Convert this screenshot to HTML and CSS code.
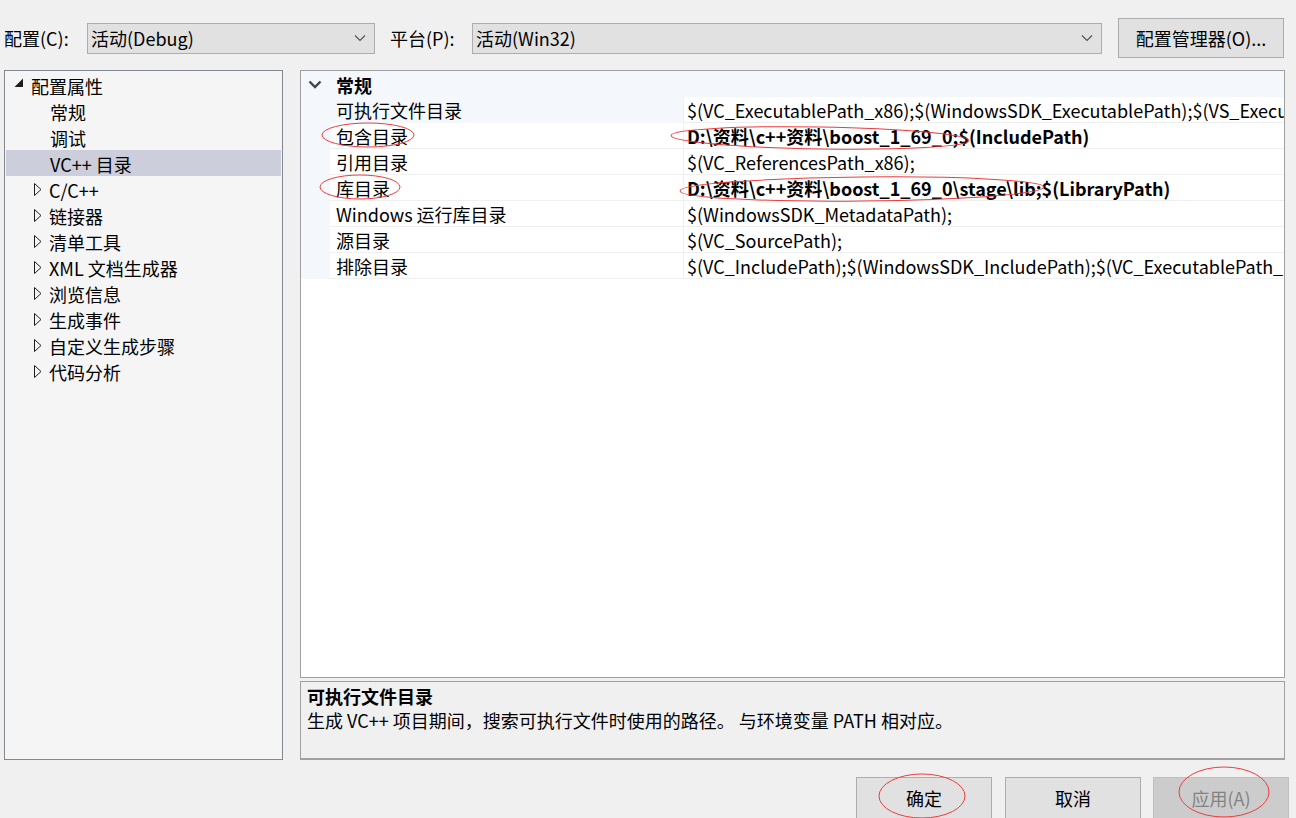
FILE: index.html
```html
<!DOCTYPE html>
<html lang="zh-CN">
<head>
<meta charset="utf-8">
<title>属性页</title>
<link rel="stylesheet" href="styles.css">
</head>
<body>
<div class="dialog">
  <div class="topbar">
    <span class="lbl lbl-config">配置(C):</span>
    <div class="combo combo-config">
      <span class="combo-text">活动(Debug)</span>
      <svg class="combo-arrow" width="12" height="8" viewBox="0 0 12 8"><polyline points="1,1.5 6,6.5 11,1.5" fill="none" stroke="#555" stroke-width="1.2"/></svg>
    </div>
    <span class="lbl lbl-platform">平台(P):</span>
    <div class="combo combo-platform">
      <span class="combo-text">活动(Win32)</span>
      <svg class="combo-arrow" width="12" height="8" viewBox="0 0 12 8"><polyline points="1,1.5 6,6.5 11,1.5" fill="none" stroke="#555" stroke-width="1.2"/></svg>
    </div>
    <button class="btn btn-manager">配置管理器(O)...</button>
  </div>

  <div class="main">
    <div class="tree">
      <div class="node root">
        <svg class="tw tw-open" width="10" height="10" viewBox="0 0 10 10"><polygon points="9,0.5 9,9 0.5,9" fill="#1E1E1E"/></svg>
        <span>配置属性</span>
      </div>
      <div class="node leaf"><span>常规</span></div>
      <div class="node leaf"><span>调试</span></div>
      <div class="node leaf selected"><span>VC++ 目录</span></div>
      <div class="node branch"><svg class="tw" width="8" height="13" viewBox="0 0 8 13"><polygon points="0.5,0.5 7,6.5 0.5,12.5" fill="none" stroke="#1E1E1E" stroke-width="1"/></svg><span>C/C++</span></div>
      <div class="node branch"><svg class="tw" width="8" height="13" viewBox="0 0 8 13"><polygon points="0.5,0.5 7,6.5 0.5,12.5" fill="none" stroke="#1E1E1E" stroke-width="1"/></svg><span>链接器</span></div>
      <div class="node branch"><svg class="tw" width="8" height="13" viewBox="0 0 8 13"><polygon points="0.5,0.5 7,6.5 0.5,12.5" fill="none" stroke="#1E1E1E" stroke-width="1"/></svg><span>清单工具</span></div>
      <div class="node branch"><svg class="tw" width="8" height="13" viewBox="0 0 8 13"><polygon points="0.5,0.5 7,6.5 0.5,12.5" fill="none" stroke="#1E1E1E" stroke-width="1"/></svg><span>XML 文档生成器</span></div>
      <div class="node branch"><svg class="tw" width="8" height="13" viewBox="0 0 8 13"><polygon points="0.5,0.5 7,6.5 0.5,12.5" fill="none" stroke="#1E1E1E" stroke-width="1"/></svg><span>浏览信息</span></div>
      <div class="node branch"><svg class="tw" width="8" height="13" viewBox="0 0 8 13"><polygon points="0.5,0.5 7,6.5 0.5,12.5" fill="none" stroke="#1E1E1E" stroke-width="1"/></svg><span>生成事件</span></div>
      <div class="node branch"><svg class="tw" width="8" height="13" viewBox="0 0 8 13"><polygon points="0.5,0.5 7,6.5 0.5,12.5" fill="none" stroke="#1E1E1E" stroke-width="1"/></svg><span>自定义生成步骤</span></div>
      <div class="node branch"><svg class="tw" width="8" height="13" viewBox="0 0 8 13"><polygon points="0.5,0.5 7,6.5 0.5,12.5" fill="none" stroke="#1E1E1E" stroke-width="1"/></svg><span>代码分析</span></div>
    </div>

    <div class="right">
      <div class="grid">
        <div class="grow header">
          <div class="gutter"><svg width="14" height="10" viewBox="0 0 14 10"><polyline points="1.5,1.5 7,7 12.5,1.5" fill="none" stroke="#444" stroke-width="2.4"/></svg></div>
          <div class="hname">常规</div>
        </div>
        <div class="grow">
          <div class="gutter"></div>
          <div class="name active">可执行文件目录</div>
          <div class="value">$(VC_ExecutablePath_x86);$(WindowsSDK_ExecutablePath);$(VS_Execu</div>
        </div>
        <div class="grow">
          <div class="gutter"></div>
          <div class="name">包含目录</div>
          <div class="value bold">D:\资料\c++资料\boost_1_69_0;$(IncludePath)</div>
        </div>
        <div class="grow">
          <div class="gutter"></div>
          <div class="name">引用目录</div>
          <div class="value">$(VC_ReferencesPath_x86);</div>
        </div>
        <div class="grow">
          <div class="gutter"></div>
          <div class="name">库目录</div>
          <div class="value bold">D:\资料\c++资料\boost_1_69_0\stage\lib;$(LibraryPath)</div>
        </div>
        <div class="grow">
          <div class="gutter"></div>
          <div class="name">Windows 运行库目录</div>
          <div class="value">$(WindowsSDK_MetadataPath);</div>
        </div>
        <div class="grow">
          <div class="gutter"></div>
          <div class="name">源目录</div>
          <div class="value">$(VC_SourcePath);</div>
        </div>
        <div class="grow">
          <div class="gutter"></div>
          <div class="name">排除目录</div>
          <div class="value">$(VC_IncludePath);$(WindowsSDK_IncludePath);$(VC_ExecutablePath_</div>
        </div>
      </div>
      <div class="desc">
        <div class="desc-title">可执行文件目录</div>
        <div class="desc-text">生成 VC++ 项目期间，搜索可执行文件时使用的路径。 与环境变量 PATH 相对应。</div>
      </div>
    </div>
  </div>

  <div class="actions">
    <button class="btn btn-action">确定</button>
    <button class="btn btn-action">取消</button>
    <button class="btn btn-action disabled">应用(A)</button>
  </div>

  <svg class="annot" width="1296" height="818" viewBox="0 0 1296 818">
    <ellipse cx="368" cy="135" rx="46" ry="12" />
    <ellipse cx="360" cy="187" rx="40" ry="12" />
    <ellipse cx="820" cy="138" rx="149" ry="11" transform="rotate(1 820 138)" />
    <ellipse cx="862" cy="189" rx="182" ry="12" transform="rotate(-0.6 862 189)" />
    <ellipse cx="922" cy="796" rx="43" ry="22" />
    <ellipse cx="1224" cy="792" rx="45" ry="25" />
  </svg>
</div>
</body>
</html>
```
FILE: styles.css
```css
* { box-sizing: border-box; }
html, body {
  margin: 0;
  padding: 0;
}
body {
  background: #F0F0F0;
  font-family: "Noto Sans CJK SC", "Noto Sans", sans-serif;
  font-size: 18px;
  color: #000;
  width: 1296px;
  height: 818px;
  overflow: hidden;
}
.dialog {
  position: relative;
  width: 1296px;
  height: 818px;
  padding: 18px 0 0 4px;
  overflow: hidden;
}

/* top bar */
.topbar {
  display: flex;
  align-items: center;
  height: 40px;
}
.lbl {
  display: block;
  line-height: 26px;
  white-space: nowrap;
}
.lbl-config { width: 83px; }
.lbl-platform { width: 82px; margin-left: 15px; }
.combo {
  display: flex;
  align-items: center;
  justify-content: space-between;
  height: 31px;
  background: #E1E1E1;
  border: 1px solid #ADADAD;
  padding: 0 8px 0 3px;
}
.combo-config { width: 288px; }
.combo-platform { width: 630px; }
.combo-text { line-height: 26px; white-space: nowrap; }
.combo-arrow { display: block; }

.btn {
  font-family: inherit;
  font-size: 18px;
  color: #000;
  background: #E1E1E1;
  border: 1px solid #ADADAD;
  padding: 0;
  margin: 0;
}
.btn-manager {
  width: 166px;
  height: 40px;
  margin-left: 16px;
}

/* main */
.main {
  display: flex;
  margin-top: 12px;
  height: 690px;
}
.tree {
  width: 279px;
  height: 690px;
  background: #F5F5F5;
  border: 1px solid #828790;
  padding: 1px 1px 0 1px;
}
.node {
  display: flex;
  align-items: center;
  height: 26px;
  white-space: nowrap;
}
.node span { line-height: 26px; padding-top: 1px; }
.node.root { padding-left: 8px; }
.node.root .tw-open { margin-right: 7px; margin-top: -4px; }
.node.leaf { padding-left: 44px; }
.node.selected { background: #CCCEDB; }
.node.branch { padding-left: 28px; }
.node.branch .tw { margin-right: 7px; }

.right {
  margin-left: 17px;
  width: 985px;
  display: flex;
  flex-direction: column;
}
.grid {
  height: 608px;
  background: #FFFFFF;
  border: 1px solid #A0A0A0;
  overflow: hidden;
}
.grow {
  display: grid;
  grid-template-columns: 29px 353px 1fr;
  height: 26px;
}
.grow.header {
  background: #F4F7FC;
  grid-template-columns: 29px 1fr;
}
.gutter {
  background: #F4F7FC;
  display: flex;
  align-items: center;
  padding-left: 7px;
}
.hname {
  font-weight: bold;
  line-height: 26px;
  padding-left: 6px;
  padding-top: 1px;
}
.name {
  line-height: 25px;
  padding: 1px 0 0 6px;
  border-bottom: 1px solid #F0F0F0;
  white-space: nowrap;
  overflow: hidden;
}
.name.active { background: #F4F7FC; border-bottom-color: #F4F7FC; }
.value {
  line-height: 25px;
  padding: 1px 0 0 3px;
  border-left: 1px solid #F0F0F0;
  border-bottom: 1px solid #F0F0F0;
  white-space: nowrap;
  overflow: hidden;
}
.value.bold { font-weight: bold; }

.desc {
  margin-top: 3px;
  height: 79px;
  background: #F0F0F0;
  border: 1px solid #A0A0A0;
  border-bottom: 2px solid #A0A0A0;
  padding: 2px 0 0 6px;
}
.desc-title { font-weight: bold; line-height: 24px; }
.desc-text { line-height: 24px; white-space: nowrap; }

/* actions */
.actions {
  display: flex;
  margin-top: 17px;
  padding-left: 852px;
}
.btn-action {
  width: 136px;
  height: 42px;
  margin-right: 13px;
  padding-top: 0;
}
.btn-action.disabled {
  background: #CCCCCC;
  border-color: #BFBFBF;
  color: #838383;
  margin-right: 0;
  margin-left: -1px;
}

/* annotation overlay */
.annot {
  position: absolute;
  left: 0;
  top: 0;
  pointer-events: none;
}
.annot ellipse {
  fill: none;
  stroke: #EE3B3B;
  stroke-width: 1;
}
```
